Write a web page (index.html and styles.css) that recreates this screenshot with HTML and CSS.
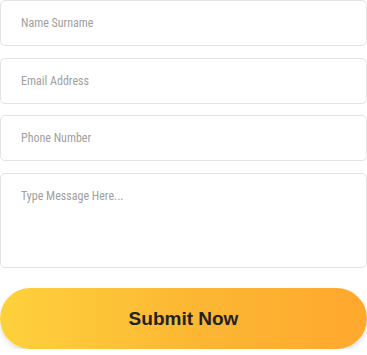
FILE: index.html
```html
<!DOCTYPE html>
<html lang="en">
<head>
<meta charset="utf-8">
<link rel="stylesheet" href="styles.css">
</head>
<body>
<form class="contact-form">
  <input class="field" type="text" placeholder="Name Surname">
  <input class="field" type="email" placeholder="Email Address">
  <input class="field" type="tel" placeholder="Phone Number">
  <textarea class="field field-message" placeholder="Type Message Here..."></textarea>
  <button class="submit" type="button">Submit Now</button>
</form>
</body>
</html>
```

FILE: styles.css
```css
html, body {
  margin: 0;
  padding: 0;
  background: #ffffff;
}

.contact-form {
  display: flex;
  flex-direction: column;
  width: 367px;
  gap: 11.5px;
}

.field {
  box-sizing: border-box;
  display: block;
  width: 100%;
  height: 46px;
  margin: 0;
  padding: 0 20px;
  border: 1px solid #e3e3e3;
  border-radius: 5px;
  background: #ffffff;
  font-family: "Roboto Condensed", Roboto, sans-serif;
  font-stretch: condensed;
  font-weight: 400;
  font-size: 12px;
  color: #555;
  outline: none;
}

.field::placeholder {
  color: #a0a0a0;
  opacity: 1;
}

.field-message {
  height: 95px;
  padding: 15px 20px;
  resize: none;
}

.submit {
  box-sizing: border-box;
  margin-top: 9px;
  width: 100%;
  height: 61px;
  border: none;
  border-radius: 31px;
  background: linear-gradient(90deg, #fed13c 0%, #fcb633 55%, #ffa82e 100%);
  box-shadow: 0 3px 5px rgba(0, 0, 0, 0.12);
  font-family: "Liberation Sans", Arial, sans-serif;
  font-weight: 700;
  font-size: 19px;
  color: #222222;
  cursor: pointer;
}
```
